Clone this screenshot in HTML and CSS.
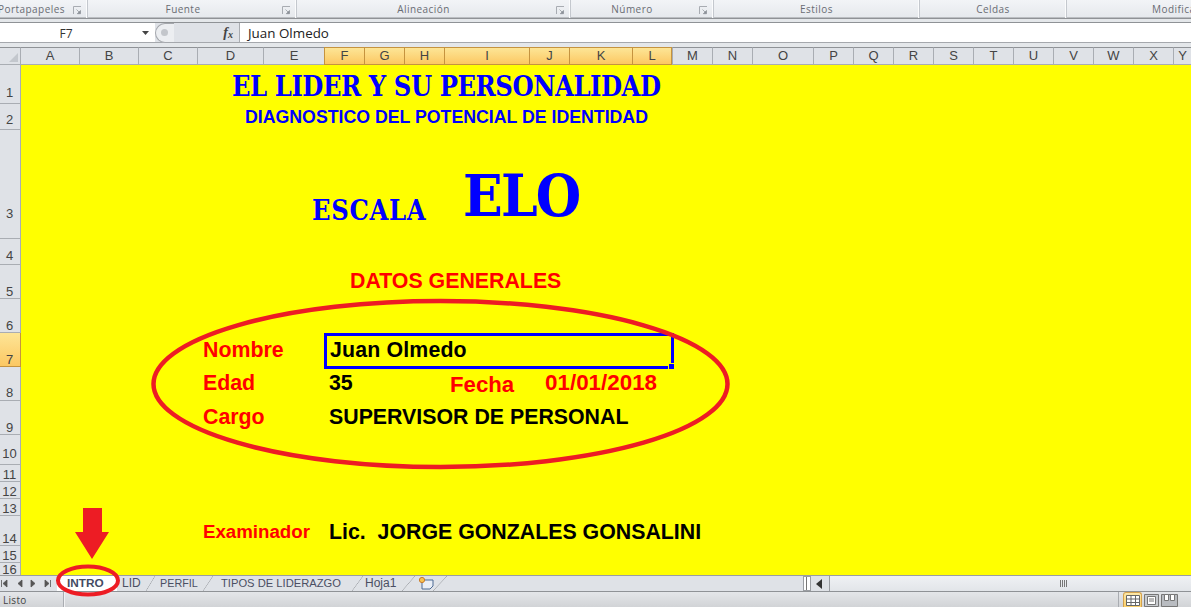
FILE: index.html
```html
<!DOCTYPE html>
<html lang="es">
<head>
<meta charset="utf-8">
<title>ELO</title>
<link rel="stylesheet" href="styles.css">
</head>
<body>
<svg class="defs" width="0" height="0" aria-hidden="true">
  <symbol id="launch" viewBox="0 0 9 9">
    <path d="M.5 8V.5H8" fill="none" stroke="#a8acb2"/>
    <path d="M3.500 3.500L7 7M7.500 4.500v3.200H4.300z" fill="#8a8f96" stroke="#8a8f96" stroke-width=".7"/>
  </symbol>
</svg>
<div class="app">
  <div class="ribbon">
    <div class="group g1"><span class="glabel clip">Portapapeles</span><svg class="launch"><use href="#launch"/></svg></div>
    <div class="group g2"><span class="glabel">Fuente</span><svg class="launch"><use href="#launch"/></svg></div>
    <div class="group g3"><span class="glabel">Alineación</span><svg class="launch"><use href="#launch"/></svg></div>
    <div class="group g4"><span class="glabel">Número</span><svg class="launch"><use href="#launch"/></svg></div>
    <div class="group g5"><span class="glabel">Estilos</span></div>
    <div class="group g6"><span class="glabel">Celdas</span></div>
    <div class="group g7"><span class="glabel">Modificar</span></div>
  </div>
  <div class="formula">
    <div class="namebox"><span class="cellname">F7</span><svg class="drop" width="7" height="4" viewBox="0 0 7 4"><path d="M0 0h7L3.500 4z" fill="#444"/></svg></div>
    <div class="fxbox">
      <div class="pill"><span class="knob"></span></div>
      <span class="fx">f<sub>x</sub></span>
    </div>
    <div class="finput">Juan Olmedo</div>
  </div>
  <div class="sheet">
    <div class="corner"><svg width="9" height="9" viewBox="0 0 9 9"><path d="M9 0v9H0z" fill="#c3c7cd"/></svg></div>
    <div class="colhead">
      <span>A</span><span>B</span><span>C</span><span>D</span><span>E</span>
      <span class="on">F</span><span class="on">G</span><span class="on">H</span><span class="on">I</span><span class="on">J</span><span class="on">K</span><span class="on">L</span>
      <span>M</span><span>N</span><span>O</span><span>P</span><span>Q</span><span>R</span><span>S</span><span>T</span><span>U</span><span>V</span><span>W</span><span>X</span><span>Y</span>
    </div>
    <div class="rowhead">
      <span class="p4">1</span><span class="p3">2</span><span class="p18">3</span><span class="p2">4</span><span>5</span><span>6</span>
      <span class="on">7</span>
      <span class="p1">8</span><span>9</span><span class="p4">10</span><span>11</span><span>12</span><span>13</span><span>14</span><span>15</span><span class="clip16">16</span>
    </div>
    <div class="canvas">
      <div class="cell title">EL LIDER Y SU PERSONALIDAD</div>
      <div class="cell subtitle">DIAGNOSTICO DEL POTENCIAL DE IDENTIDAD</div>
      <div class="cell escala">ESCALA</div>
      <div class="cell elo">ELO</div>
      <div class="cell datos">DATOS GENERALES</div>
      <div class="cell lab r7">Nombre</div>
      <div class="cell val r7 sel">Juan Olmedo<i class="handle"></i></div>
      <div class="cell lab r8">Edad</div>
      <div class="cell val r8">35</div>
      <div class="cell fecha">Fecha</div>
      <div class="cell date">01/01/2018</div>
      <div class="cell lab r9">Cargo</div>
      <div class="cell val r9">SUPERVISOR DE PERSONAL</div>
      <div class="cell lab r14">Examinador</div>
      <div class="cell val r14">Lic.&nbsp; JORGE GONZALES GONSALINI</div>
    </div>
  </div>
  <div class="tabbar">
    <div class="nav">
      <svg width="56" height="9" viewBox="0 0 56 9"><path d="M1.500 1v7M7 1L3 4.500 7 8zM22 1l-4 3.500 4 3.500zM31 1l4 3.500-4 3.500zM45 1l4 3.500-4 3.500zM50.500 1v7" fill="#555" stroke="#555" stroke-width=".8"/></svg>
    </div>
    <div class="tabs">
      <span class="tab active">INTRO</span>
      <span class="tab t-lid">LID</span>
      <span class="tab t-perfil">PERFIL</span>
      <span class="tab t-tipos">TIPOS DE LIDERAZGO</span>
      <span class="tab t-hoja">Hoja1</span>
      <span class="tab t-new"><svg width="16" height="14" viewBox="0 0 16 14"><path d="M4 4h11v6l-3 3H4z" fill="#e9eef6" stroke="#4d6a94"/><circle cx="4" cy="4" r="2.600" fill="#f6c453" stroke="#c9792a"/></svg></span>
    </div>
    <div class="hscroll">
      <span class="split"></span>
      <svg class="left" width="7" height="10" viewBox="0 0 7 10"><path d="M6 0v10L0 5z" fill="#333"/></svg>
      <div class="thumb"><span class="grip"></span></div>
    </div>
  </div>
  <div class="status">
    <span class="listo">Listo</span>
    <div class="views">
      <span class="view active"><svg width="14" height="11" viewBox="0 0 14 11"><path d="M.5.500h13v10H.5zM.5 4h13M.5 7.500h13M5 .5v10M9.500.5v10" fill="#fff" stroke="#666"/></svg></span>
      <span class="view v2"><svg width="15" height="13" viewBox="0 0 15 13"><path d="M.5.500h14v12H.5z" fill="#c9ccd0" stroke="#777"/><path d="M3.500 2.500h8v8h-8z" fill="#fff" stroke="#777"/><path d="M5 5h5M5 7h5" stroke="#777"/></svg></span>
      <span class="view v3"><svg width="17" height="13" viewBox="0 0 17 13"><path d="M.5.500h16v12H.5z" fill="#b9bcc1" stroke="#777"/><path d="M3.500.500h4v6h-4zM9.500.500h4v6h-4z" fill="#fff" stroke="#777"/></svg></span>
    </div>
  </div>
  <svg class="marks" width="1191" height="607" viewBox="0 0 1191 607" aria-hidden="true">
    <ellipse class="ring" cx="440.500" cy="384" rx="287" ry="83"/>
    <ellipse class="ring small" cx="88" cy="580.500" rx="30" ry="14"/>
    <path class="arrow" d="M83 508h19v24h7l-17 27-17-27h8z"/>
  </svg>
</div>
</body>
</html>
```
FILE: styles.css
```css
* { box-sizing: border-box; }
html, body { margin: 0; padding: 0; background: #fff; }
.defs { position: absolute; }
.app {
  position: relative;
  width: 1191px;
  height: 607px;
  overflow: hidden;
  display: flex;
  flex-direction: column;
  font-family: "Open Sans", "Liberation Sans", sans-serif;
}

/* ribbon */
.ribbon {
  height: 22px;
  display: flex;
  flex: none;
  background: linear-gradient(#f2f4f7 0, #e6e9ed 17px, #8f9296 18px, #8f9296 19px, #e4e7ea 19px, #e4e7ea 22px);
}
.group {
  height: 18px;
  flex: none;
  position: relative;
  display: flex;
  align-items: center;
  justify-content: center;
  border-right: 1px solid #c4c8ce;
  box-shadow: inset -1px 0 0 #fbfcfd;
}
.g1 { width: 88px; justify-content: flex-start; }
.g2 { width: 209px; padding-right: 18px; }
.g3 { width: 274px; padding-right: 20px; }
.g4 { width: 143px; padding-right: 20px; }
.g5 { width: 206px; }
.g6 { width: 147px; }
.g7 { flex: 1 1 0; min-width: 0; overflow: hidden; border-right: 0; box-shadow: none; justify-content: flex-start; padding-left: 85px; }
.glabel { font-size: 10px; letter-spacing: .45px; color: #696c73; white-space: nowrap; line-height: 18px; }
.clip { margin-left: -2px; }
.launch { position: absolute; right: 5px; top: 6px; width: 9px; height: 9px; }

/* formula bar */
.formula {
  height: 25px;
  flex: none;
  display: flex;
  background: #fff;
  border-top: 1px solid #8f9296;
  border-bottom: 4px solid #e4e7ea;
  box-shadow: inset 0 -1px 0 #a5a8ad;
}
.namebox { width: 155px; position: relative; display: flex; align-items: center; }
.cellname { width: 132px; text-align: center; font-size: 12px; color: #333; }
.drop { margin-left: 10px; }
.fxbox {
  width: 85px;
  background: #dfe2e7;
  border-right: 1px solid #a9acb1;
  display: flex;
  align-items: center;
  justify-content: space-between;
  padding-right: 6px;
  margin-bottom: 1px;
}
.pill {
  width: 19px; height: 20px;
  border: 1px solid #a5a8ad; border-right: 0;
  border-radius: 10px 0 0 10px;
  background: #eceef1;
  display: flex; align-items: center; padding-left: 5px;
}
.knob { width: 7px; height: 7px; border-radius: 50%; background: #c3c6cb; }
.fx { font: italic bold 14px "Liberation Serif", serif; color: #444; }
.fx sub { font-size: 10px; vertical-align: -1px; }
.finput { flex: 1; padding-left: 8px; font-size: 13.400px; line-height: 20px; color: #222; }

/* grid */
.sheet {
  flex: none;
  height: 528px;
  display: grid;
  grid-template-columns: 21px 1170px;
  grid-template-rows: 18px 510px;
}
.corner {
  background: #dfe2e7;
  border-top: 1px solid #8f9296;
  border-right: 1px solid #a9adb3;
  border-bottom: 1px solid #a9adb3;
  display: flex; align-items: flex-end; justify-content: flex-end;
  padding: 0 2px 2px 0;
}
.colhead, .canvas {
  display: grid;
  grid-template-columns: 58px 59px 59px 66px 61px 40px 40px 40px 85px 40px 63px 40px 40px 40px 61px repeat(9, 40px) 18px;
}
.colhead span {
  background: #dfe2e7;
  border-top: 1px solid #8f9296;
  border-left: 1px solid #a9adb3;
  border-bottom: 1px solid #a9adb3;
  font: 13px/16px "Liberation Sans", sans-serif;
  color: #444;
  text-align: center;
  overflow: hidden;
}
.colhead span:first-child { border-left: 0; }
.colhead span.on, .rowhead span.on {
  background: linear-gradient(#fde596, #fcc863);
  border-color: #c5933f;
}
.colhead span.on:nth-child(12) { border-right: 1px solid #c5933f; }
.rowhead, .canvas {
  grid-template-rows: 39px 26px 109px 26px 34px 34px 34px 34px 34px 30px 17px 17px 17px 30px 17px 12px;
}
.rowhead { display: grid; }
.rowhead span {
  background: #dfe2e7;
  border-right: 1px solid #a9adb3;
  border-bottom: 1px solid #a9adb3;
  font: 13px/13px "Liberation Sans", sans-serif;
  color: #444;
  padding-right: 1px;
  display: flex; align-items: flex-end; justify-content: center;
  padding-bottom: 0;
  overflow: hidden;
}
.rowhead span.p18 { padding-bottom: 18px; }
.rowhead span.p4 { padding-bottom: 4px; }
.rowhead span.p3 { padding-bottom: 3px; }
.rowhead span.p2 { padding-bottom: 2px; }
.rowhead span.p1 { padding-bottom: 1px; }
.rowhead span.clip16 { align-items: flex-start; border-bottom: 0; }
.canvas { background: #ff0; overflow: hidden; }

.cell {
  white-space: nowrap;
  font-family: "Liberation Sans", sans-serif;
  font-weight: 700;
  align-self: end;
  min-width: 0;
}
.title, .escala, .elo { font-family: "DejaVu Serif", serif; font-stretch: condensed; color: #00f; }
.title { grid-area: 1 / 4; padding-left: 35px; font-size: 27px; line-height: 34px; letter-spacing: -.43px; }
.subtitle { grid-area: 2 / 4; padding-left: 48px; font-size: 17.730px; line-height: 20px; color: #00f; margin-bottom: 3px; }
.escala { grid-area: 3 / 5; padding-left: 49px; font-size: 27px; line-height: 32px; letter-spacing: .7px; margin-bottom: 12px; }
.elo { grid-area: 3 / 9; padding-left: 19px; font-size: 58px; line-height: 66px; letter-spacing: -1.800px; margin-bottom: 10px; }
.datos { grid-area: 5 / 6; padding-left: 26px; font-size: 21.330px; line-height: 22px; color: #f00; margin-bottom: 7px; }
.lab { grid-column: 4; padding-left: 6px; font-size: 21.330px; line-height: 22px; color: #f00; }
.val { grid-column: 6; padding-left: 5px; font-size: 21.330px; line-height: 22px; color: #000; }
.r7 { grid-row: 7; margin-bottom: 6px; }
.r8 { grid-row: 8; margin-bottom: 7px; }
.r9 { grid-row: 9; margin-bottom: 7px; }
.r14 { grid-row: 14; margin-bottom: 3px; }
.lab.r14 { font-size: 18.700px; }
.sel {
  grid-column: 6 / 13;
  align-self: stretch;
  margin: 0 -2px -2px 0;
  border: 3px solid #00f;
  padding: 3px 0 0 3px;
  letter-spacing: .15px;
  position: relative;
  overflow: visible;
}
.handle { position: absolute; right: -3px; bottom: -3px; width: 6px; height: 6px; background: #00f; border: 1px solid #ff0; border-width: 1px 0 0 1px; }
.fecha { grid-area: 8 / 9; padding-left: 6px; font-size: 22.200px; line-height: 22px; color: #f00; margin-bottom: 5px; }
.date { grid-area: 8 / 10; padding-left: 16px; font-size: 22.400px; line-height: 22px; color: #f00; margin-bottom: 7px; }

/* sheet tabs */
.tabbar {
  height: 17px;
  flex: none;
  display: flex;
  background: #dfe2e7;
  border-top: 1px solid #9a9da2;
  border-bottom: 1px solid #8f9296;
}
.nav { width: 57px; padding: 3px 0 0 0; flex: none; }
.nav svg { display: block; }
.tabs { width: 746px; flex: none; display: flex; align-items: stretch; font-size: 12px; color: #4b4f63; line-height: 15px; }
.tab {
  display: block;
  flex: none;
  white-space: nowrap;
  font-family: "Liberation Sans", sans-serif;
}
.tab.active { width: 60px; padding-left: 10px; background: #fff; font-weight: 700; color: #444b63; font-size: 11.800px; }
.t-lid, .t-perfil, .t-tipos, .t-hoja, .t-new {
  background-image: linear-gradient(to top left, transparent calc(50% - .6px), #a8abb0 50%, transparent calc(50% + .6px));
  background-repeat: no-repeat;
}
.t-lid { width: 43px; padding-left: 5px; background-position: right 5px top 0; background-size: 9px 15px; }
.t-perfil { width: 61px; font-size: 10.800px; background-position: right 8px top 0; background-size: 10px 15px; }
.t-tipos { width: 144px; font-size: 11.200px; background-position: right 2px top 0; background-size: 11px 15px; }
.t-hoja { width: 53px; background-position: right 3px top 0; background-size: 13px 15px; }
.t-new { width: 30px; background-position: right 1px top 0; background-size: 14px 15px; }
.t-new svg { display: block; }
.hscroll { flex: 1; display: flex; align-items: center; }
.split { width: 8px; height: 15px; background: #fff; border: 1px solid #9a9da2; box-shadow: inset 2px 0 0 #fff, inset 3px 0 0 #777, inset 4px 0 0 #fff; }
.left { margin-left: 5px; }
.thumb {
  margin-left: 6px;
  flex: 1;
  height: 15px;
  border-left: 1px solid #9a9da2;
  background: linear-gradient(#eff1f4, #e2e5e9);
  display: flex;
  justify-content: flex-start;
  padding: 4px 0 0 230px;
}
.grip { width: 7px; height: 7px; background: repeating-linear-gradient(90deg, #777 0 1px, transparent 1px 2px); }

/* status bar */
.status {
  flex: 1;
  position: relative;
  display: flex;
  justify-content: space-between;
  background: linear-gradient(#e4e6e9, #cfd1d4);
}
.listo { width: 64px; padding-left: 3px; font-size: 10px; letter-spacing: .3px; line-height: 17px; color: #444; border-right: 1px solid #a9acb1; box-shadow: 1px 0 0 #f0f1f3; }
.views {
  display: flex;
  gap: 2px;
  margin-right: 13px;
  padding-left: 4px;
  border-left: 1px solid #a9acb1;
  align-items: flex-start;
}
.view { height: 15px; display: flex; justify-content: center; padding-top: 2px; }
.view.active { width: 19px; background: linear-gradient(#fde8a8, #fbcf6a); border: 1px solid #d5a24c; border-bottom: 0; border-radius: 3px 3px 0 0; padding-top: 2px; }
.v2 { width: 15px; }
.v3 { width: 17px; }

/* hand-drawn marks over the sheet */
.marks { position: absolute; left: 0; top: 0; pointer-events: none; }
.ring { fill: none; stroke: #ed1c24; stroke-width: 4.500px; }
.ring.small { stroke-width: 4px; }
.arrow { fill: #ed1c24; }
```
